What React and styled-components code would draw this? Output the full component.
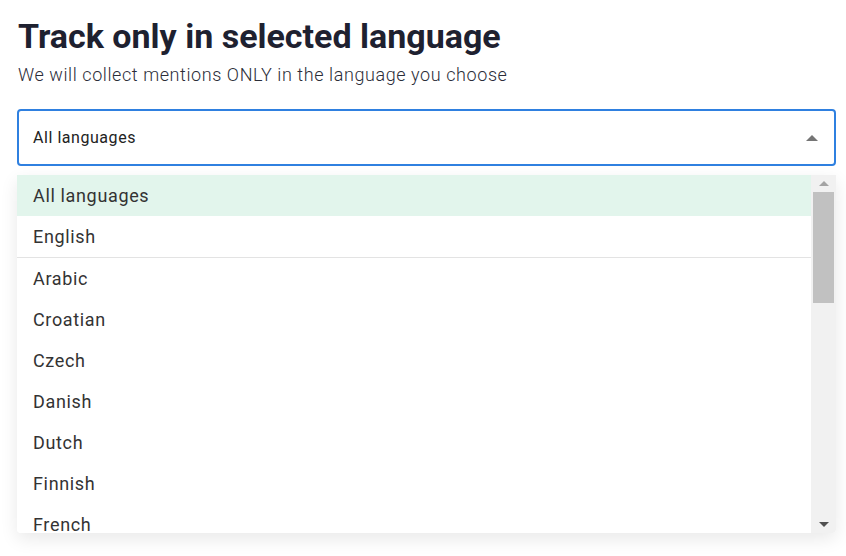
import React from 'react';
import styled, { createGlobalStyle } from 'styled-components';

const languages = [
  'All languages',
  'English',
  'Arabic',
  'Croatian',
  'Czech',
  'Danish',
  'Dutch',
  'Finnish',
  'French',
];

const App = () => (
  <Page>
    <GlobalStyle />
    <Title>Track only in selected language</Title>
    <Subtitle>We will collect mentions ONLY in the language you choose</Subtitle>
    <SelectWrap>
      <SelectBox>
        <SelectValue>All languages</SelectValue>
        <Caret />
      </SelectBox>
      <Menu>
        <List>
          {languages.map((lang, i) => (
            <Option key={lang} selected={i === 0} divided={i === 1}>
              {lang}
            </Option>
          ))}
        </List>
        <Scrollbar>
          <ScrollButton>
            <Arrow up />
          </ScrollButton>
          <Track>
            <Thumb />
          </Track>
          <ScrollButton>
            <Arrow />
          </ScrollButton>
        </Scrollbar>
      </Menu>
    </SelectWrap>
  </Page>
);

export default App;

const GlobalStyle = createGlobalStyle`
  html, body {
    margin: 0;
    padding: 0;
    background: #fff;
    font-family: Roboto, "Liberation Sans", sans-serif;
  }
`;

const Page = styled.div`
  padding: 15px 10px 0 17px;
  height: 556px;
  box-sizing: border-box;
  overflow: hidden;
`;

const Title = styled.h1`
  margin: 0 0 0 1px;
  font-size: 34px;
  line-height: 42px;
  font-weight: 700;
  color: #1e2130;
`;

const Subtitle = styled.p`
  margin: 6px 0 0 1px;
  font-size: 18px;
  line-height: 24px;
  font-weight: 300;
  letter-spacing: 0.58px;
  color: #2b2d38;
`;

const SelectWrap = styled.div`
  position: relative;
  margin-top: 22px;
`;

const SelectBox = styled.div`
  display: flex;
  align-items: center;
  justify-content: space-between;
  height: 57px;
  box-sizing: border-box;
  padding: 0 16px 0 14px;
  border: 2px solid #2f80e0;
  border-radius: 4px;
  background: #fff;
`;

const SelectValue = styled.span`
  font-size: 16px;
  letter-spacing: 0.55px;
  color: #222;
`;

const Caret = styled.span`
  width: 0;
  height: 0;
  border-left: 6px solid transparent;
  border-right: 6px solid transparent;
  border-bottom: 6px solid #757575;
`;

const Menu = styled.div`
  position: absolute;
  top: 66px;
  left: 0;
  right: 0;
  height: 358px;
  display: flex;
  background: #fff;
  border-radius: 0 0 4px 4px;
  box-shadow: 0 6px 18px rgba(0, 0, 0, 0.09);
  overflow: hidden;
`;

const List = styled.ul`
  flex: 1;
  margin: 0;
  padding: 0;
  list-style: none;
  overflow: hidden;
`;

const Option = styled.li`
  height: 41px;
  display: flex;
  align-items: center;
  padding-left: 16px;
  font-size: 18px;
  color: #333;
  letter-spacing: 0.65px;
  background: ${p => (p.selected ? '#e2f5ec' : '#fff')};
  border-bottom: ${p => (p.divided ? '1px solid #e3e3e3' : 'none')};
`;

const Scrollbar = styled.div`
  width: 25px;
  display: flex;
  flex-direction: column;
  background: #f1f1f1;
`;

const ScrollButton = styled.div`
  height: 17px;
  display: flex;
  align-items: center;
  justify-content: center;
`;

const Track = styled.div`
  flex: 1;
  padding: 0 2px;
`;

const Thumb = styled.div`
  height: 111px;
  background: #c1c1c1;
`;

const Arrow = styled.span`
  width: 0;
  height: 0;
  border-left: 5px solid transparent;
  border-right: 5px solid transparent;
  ${p =>
    p.up
      ? 'border-bottom: 5px solid #a3a3a3;'
      : 'border-top: 5px solid #505050;'}
`;
